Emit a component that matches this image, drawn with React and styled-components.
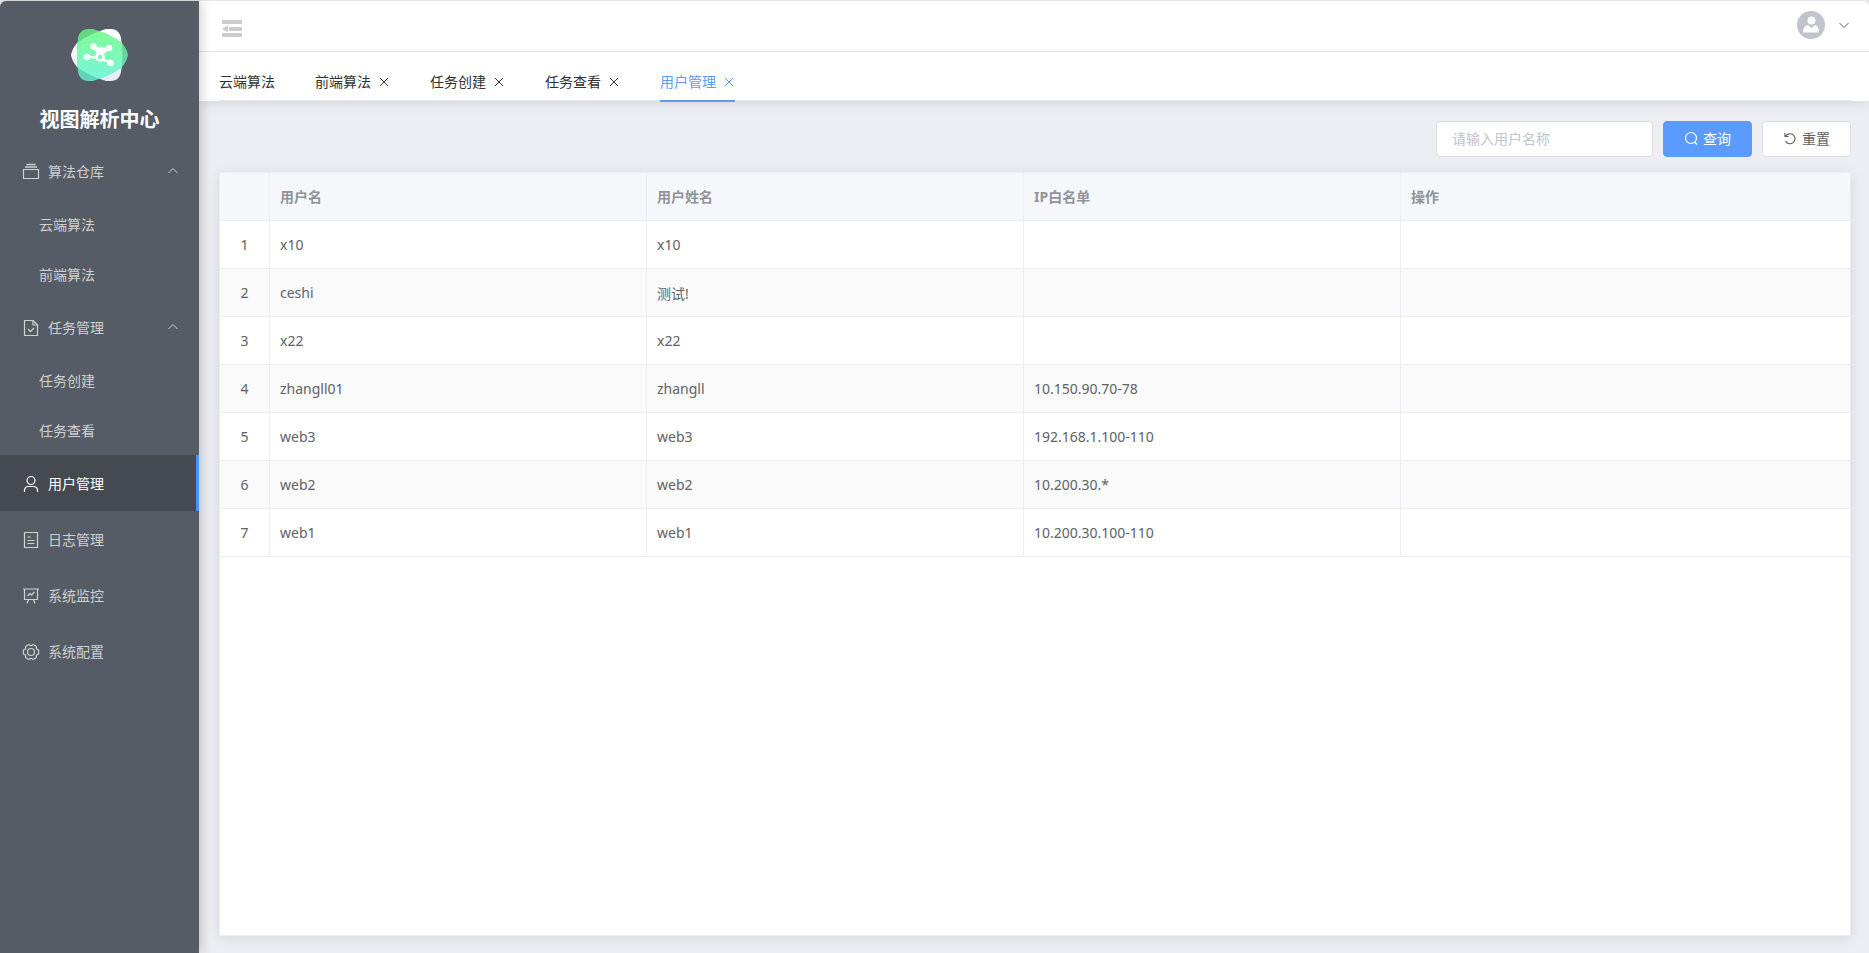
import { useState } from "react";
import { createGlobalStyle, styled } from "styled-components";

const menu = [
  {
    name: "算法仓库",
    icon: "box",
    children: ["云端算法", "前端算法"],
  },
  {
    name: "任务管理",
    icon: "task",
    children: ["任务创建", "任务查看"],
  },
  { name: "用户管理", icon: "user" },
  { name: "日志管理", icon: "log" },
  { name: "系统监控", icon: "monitor" },
  { name: "系统配置", icon: "setting" },
];

const users = [
  { username: "x10", name: "x10", ip: "" },
  { username: "ceshi", name: "测试!", ip: "" },
  { username: "x22", name: "x22", ip: "" },
  { username: "zhangll01", name: "zhangll", ip: "10.150.90.70-78" },
  { username: "web3", name: "web3", ip: "192.168.1.100-110" },
  { username: "web2", name: "web2", ip: "10.200.30.*" },
  { username: "web1", name: "web1", ip: "10.200.30.100-110" },
];

const icons = {
  box: (
    <>
      <path d="M4.5 1.5h9M3 4h12" strokeWidth="1.6" />
      <path d="M1.5 6.5h15v9h-15z" />
    </>
  ),
  task: (
    <>
      <path d="M2.5 1.5h8.5l4.5 4.5v10.5h-13z" />
      <path d="M11 1.5v4.5h4.5M6 10l2.5 2.5 3.5-3.5" />
    </>
  ),
  user: (
    <>
      <circle cx="9" cy="5.5" r="4" />
      <path d="M2.5 17v-2a4 4 0 0 1 4-3.5h5a4 4 0 0 1 4 3.5v2" />
    </>
  ),
  log: (
    <>
      <path d="M2.5 1.5h13v15h-13z" />
      <path d="M5.5 6h3M5.5 9.5h7M5.5 12.5h7" />
    </>
  ),
  monitor: (
    <>
      <path d="M1 2h16M2.5 2v10.5h13V2M6.5 12.5L5 16.5M11.5 12.5l1.5 4" />
      <path d="M5.5 9l2.5-2.5 1.5 1.5 3-3" />
    </>
  ),
  setting: (
    <>
      <path d="M16.6 7.1v3.8L14.5 12.100 14.400 14.600 11.200 16.500 9 15.300 6.800 16.500 3.600 14.600 3.500 12.100 1.400 10.900V7.100L3.500 5.900 3.600 3.400 6.800 1.500 9 2.700 11.200 1.500 14.400 3.400 14.500 5.900z" />
      <circle cx="9" cy="9" r="3.500" />
    </>
  ),
};

const MenuIcon = ({ name }) => (
  <IconBox>
    <svg width="18" height="18" viewBox="0 0 18 18" fill="none" stroke="currentColor" strokeWidth="1.2" strokeLinejoin="round">
      {icons[name]}
    </svg>
  </IconBox>
);

const Arrow = ({ up }) => (
  <svg width="12" height="12" viewBox="0 0 12 12" fill="none" stroke="currentColor">
    <path d={up ? "M1.500 8L6 3.500 10.500 8" : "M1.500 4L6 8.500 10.500 4"} />
  </svg>
);

const Logo = () => (
  <svg width="58" height="54" viewBox="0 0 58 54">
    <defs>
      <linearGradient id="white" x1="0" y1="0" x2="0" y2="1">
        <stop offset="0" stopColor="#ffffff" />
        <stop offset="1" stopColor="#e4ebf8" />
      </linearGradient>
      <linearGradient id="dark" x1="0" y1="0" x2="0" y2="1">
        <stop offset="0" stopColor="#68d67c" />
        <stop offset="1" stopColor="#62d3c0" />
      </linearGradient>
      <linearGradient id="light" x1="0" y1="0" x2="0" y2="1">
        <stop offset="0" stopColor="#82fb94" />
        <stop offset="1" stopColor="#78f5de" />
      </linearGradient>
      <clipPath id="left">
        <path d="M40 1C46 1 49 5 50 10Q53 27 50 44C49 49 46 53 40 53H35Q18 48 6 39 1 33 0 27 1 21 6 15 18 6 35 1z" />
      </clipPath>
    </defs>
    <path
      d="M40 1C46 1 49 5 50 10Q53 27 50 44C49 49 46 53 40 53H35Q18 48 6 39 1 33 0 27 1 21 6 15 18 6 35 1z"
      fill="url(#white)"
    />
    <path
      d="M17 1C11 1 8 5 7 10Q5 27 7 44C8 49 11 53 17 53H22Q39 48 51 39 56 33 57 27 56 21 51 15 39 6 22 1z"
      fill="url(#dark)"
    />
    <path
      d="M17 1C11 1 8 5 7 10Q5 27 7 44C8 49 11 53 17 53H22Q39 48 51 39 56 33 57 27 56 21 51 15 39 6 22 1z"
      fill="url(#light)"
      clipPath="url(#left)"
    />
    <g stroke="#fff" strokeWidth="1.500" fill="#fff">
      <path d="M22.500 18.500L29 29l9-9M16 29h13l10.500 6" />
      <circle cx="22.500" cy="18.500" r="2.500" />
      <circle cx="38" cy="20" r="2.500" />
      <circle cx="16" cy="29" r="2.500" />
      <circle cx="39.500" cy="35" r="2.500" />
      <circle cx="29" cy="29" r="3.500" fill="#7cf8b8" strokeWidth="2.500" />
    </g>
  </svg>
);

const App = () => {
  const [tabs, setTabs] = useState(["云端算法", "前端算法", "任务创建", "任务查看", "用户管理"]);
  const [active, setActive] = useState("用户管理");
  const [closed, setClosed] = useState([]);
  const [keyword, setKeyword] = useState("");
  const [query, setQuery] = useState("");

  const openPage = (name) => {
    if (!tabs.includes(name)) setTabs([...tabs, name]);
    setActive(name);
  };

  const closeTab = (name) => {
    const rest = tabs.filter((tab) => tab !== name);
    setTabs(rest);
    if (name === active) setActive(rest[rest.length - 1]);
  };

  const toggle = (name) => {
    setClosed(closed.includes(name) ? closed.filter((n) => n !== name) : [...closed, name]);
  };

  const handleSubmit = (e) => {
    e.preventDefault();
    setQuery(keyword);
  };

  const handleReset = () => {
    setKeyword("");
    setQuery("");
  };

  return (
    <>
      <GlobalStyle />
      <Page>
        <Sidebar>
          <Brand>
            <Logo />
            <Title>视图解析中心</Title>
          </Brand>
          <nav>
            {menu.map((item) => (
              <div key={item.name}>
                <MenuItem
                  $active={active === item.name}
                  onClick={() => (item.children ? toggle(item.name) : openPage(item.name))}
                >
                  <MenuIcon name={item.icon} />
                  <span>{item.name}</span>
                  {item.children && (
                    <MenuArrow>
                      <Arrow up={!closed.includes(item.name)} />
                    </MenuArrow>
                  )}
                </MenuItem>
                {item.children &&
                  !closed.includes(item.name) &&
                  item.children.map((child) => (
                    <SubItem key={child} $active={active === child} onClick={() => openPage(child)}>
                      {child}
                    </SubItem>
                  ))}
              </div>
            ))}
          </nav>
        </Sidebar>

        <Main>
          <Header>
            <IconButton aria-label="收起菜单">
              <svg width="20" height="18" viewBox="0 0 20 18" fill="#ccc">
                <path d="M0 0h20v4H0zM7 7h13v4H7zM0 13h20v4H0zM0 9l6-3.500v7z" />
              </svg>
            </IconButton>
            <UserButton aria-label="用户菜单">
              <svg width="28" height="28" viewBox="0 0 28 28">
                <circle cx="14" cy="14" r="14" fill="#c1c3cd" />
                <circle cx="14.500" cy="9.500" r="4" fill="#fff" />
                <path d="M6 21.500q0-6.500 5-7.500l3.500 3 3.500-3q4 1 4 7.500z" fill="#fff" />
              </svg>
              <Arrow />
            </UserButton>
          </Header>

          <TabBar>
            <TabNav>
              {tabs.map((tab, i) => (
                <Tab key={tab} $active={tab === active}>
                  <TabLink onClick={() => setActive(tab)}>{tab}</TabLink>
                  {i > 0 && (
                    <TabClose aria-label={`关闭${tab}`} onClick={() => closeTab(tab)}>
                      <svg width="14" height="14" viewBox="0 0 14 14" stroke="currentColor">
                        <path d="M4 4l8 8M12 4l-8 8" />
                      </svg>
                    </TabClose>
                  )}
                </Tab>
              ))}
            </TabNav>
          </TabBar>

          <Content>
            <Toolbar onSubmit={handleSubmit}>
              <Input
                aria-label="用户名称"
                placeholder="请输入用户名称"
                value={keyword}
                onChange={(e) => setKeyword(e.target.value)}
              />
              <Button type="submit" $primary>
                <svg width="14" height="14" viewBox="0 0 14 14" fill="none" stroke="currentColor" strokeWidth="1.200">
                  <circle cx="7" cy="7" r="5.500" />
                  <path d="M10.500 11l2.500 2.500" />
                </svg>
                查询
              </Button>
              <Button type="button" onClick={handleReset}>
                <svg width="14" height="14" viewBox="0 0 14 14" fill="none" stroke="currentColor" strokeWidth="1.200">
                  <path d="M2 2v3.500h3.500M2.500 5.500a5 5 0 1 1 0 4.500" />
                </svg>
                重置
              </Button>
            </Toolbar>

            <Panel>
              <Table>
                <colgroup>
                  <Col $width="50px" />
                  <Col $width="377px" />
                  <Col $width="377px" />
                  <Col $width="377px" />
                  <Col />
                </colgroup>
                <thead>
                  <tr>
                    <Th />
                    <Th>用户名</Th>
                    <Th>用户姓名</Th>
                    <Th>IP白名单</Th>
                    <Th>操作</Th>
                  </tr>
                </thead>
                <tbody>
                  {users
                    .filter((user) => user.username.includes(query))
                    .map((user, i) => (
                      <Row key={user.username}>
                        <Td $center>{i + 1}</Td>
                        <Td>{user.username}</Td>
                        <Td>{user.name}</Td>
                        <Td>{user.ip}</Td>
                        <Td />
                      </Row>
                    ))}
                </tbody>
              </Table>
            </Panel>
          </Content>
        </Main>
      </Page>
    </>
  );
};

const GlobalStyle = createGlobalStyle`
  * {
    box-sizing: border-box;
  }
  body {
    margin: 0;
    background: #e8e8ea;
    font-family: "Noto Sans", "Noto Sans CJK SC", sans-serif;
    font-size: 14px;
    color: #606266;
  }
  button, input {
    font: inherit;
    color: inherit;
  }
  button {
    padding: 0;
    border: none;
    background: none;
    cursor: pointer;
  }
  svg {
    display: block;
    flex-shrink: 0;
  }
`;

const Page = styled.div`
  display: flex;
  min-height: 100vh;
  border-top: 1px solid #e8e8ea;
`;

const Sidebar = styled.aside`
  width: 199px;
  flex-shrink: 0;
  z-index: 2;
  background: #555c65;
  color: #d0d0d0;
  border-top-left-radius: 6px;
  box-shadow: 2px 0 12px rgba(0, 0, 0, 0.2);
`;

const Brand = styled.div`
  display: flex;
  flex-direction: column;
  align-items: center;
  gap: 23px;
  height: 142px;
  padding-top: 27px;
`;

const Title = styled.h1`
  margin: 0;
  font-size: 20px;
  line-height: 30px;
  font-weight: bold;
  color: #fff;
`;

const MenuItem = styled.button`
  display: flex;
  align-items: center;
  gap: 5px;
  width: 100%;
  height: 56px;
  padding-left: 19px;
  padding-right: 17px;
  color: ${(props) => (props.$active ? "#fff" : "inherit")};
  background: ${(props) => (props.$active ? "#454a51" : "none")};
  border-right: 3px solid ${(props) => (props.$active ? "#4791ff" : "transparent")};
`;

const IconBox = styled.span`
  display: flex;
  justify-content: center;
  width: 24px;
  padding-top: 2px;
`;

const MenuArrow = styled.span`
  margin-left: auto;
`;

const SubItem = styled.button`
  display: block;
  width: 100%;
  height: 50px;
  padding-left: 39px;
  text-align: left;
  color: ${(props) => (props.$active ? "#fff" : "inherit")};
`;

const Main = styled.main`
  display: flex;
  flex-direction: column;
  flex: 1;
  min-width: 0;
  background: #edeef3;
  border-top-right-radius: 6px;
`;

const Header = styled.header`
  display: flex;
  align-items: center;
  justify-content: space-between;
  z-index: 1;
  height: 51px;
  padding: 0 19px 2px 23px;
  background: #fff;
  border-bottom: 1px solid #e6e6e6;
  border-top-right-radius: 6px;
`;

const IconButton = styled.button`
  padding-top: 8px;
`;

const UserButton = styled.button`
  display: flex;
  align-items: center;
  gap: 13px;
`;

const TabBar = styled.div`
  padding: 0 18px 0 20px;
  background: #fff;
  box-shadow: 0 2px 12px rgba(0, 0, 0, 0.1);
`;

const TabNav = styled.div`
  display: flex;
  gap: 40px;
  height: 49px;
  padding-top: 9px;
  border-bottom: 1px solid #e4e7ed;
`;

const Tab = styled.div`
  display: flex;
  align-items: center;
  gap: 5px;
  margin-bottom: -2px;
  color: ${(props) => (props.$active ? "#5b9bff" : "#303133")};
  border-bottom: 2px solid ${(props) => (props.$active ? "#5b9bff" : "transparent")};
`;

const TabLink = styled.button`
  height: 100%;
`;

const TabClose = styled.button`
  height: 14px;
`;

const Content = styled.section`
  display: flex;
  flex-direction: column;
  flex: 1;
  gap: 15px;
  padding: 20px 18px 17px 20px;
`;

const Toolbar = styled.form`
  display: flex;
  justify-content: flex-end;
  gap: 10px;
`;

const Input = styled.input`
  width: 217px;
  height: 36px;
  padding: 0 15px 2px;
  background: #fff;
  border: 1px solid #dcdfe6;
  border-radius: 4px;
  outline: none;

  &::placeholder {
    color: #c0c4cc;
  }
`;

const Button = styled.button`
  display: flex;
  align-items: center;
  justify-content: center;
  gap: 5px;
  width: 89px;
  height: 36px;
  padding-bottom: 2px;
  border-radius: 4px;
  color: ${(props) => (props.$primary ? "#fff" : "#606266")};
  background: ${(props) => (props.$primary ? "#5b9bff" : "#fff")};
  border: 1px solid ${(props) => (props.$primary ? "#5b9bff" : "#dcdfe6")};
`;

const Panel = styled.div`
  flex: 1;
  background: #fff;
  border: 1px solid #ebeef5;
  box-shadow: 0 2px 12px rgba(0, 0, 0, 0.1);
`;

const Table = styled.table`
  width: 100%;
  table-layout: fixed;
  border-collapse: separate;
  border-spacing: 0;
`;

const Col = styled.col`
  width: ${(props) => props.$width || "auto"};
`;

const Th = styled.th`
  height: 48px;
  padding: 0 10px 2px;
  text-align: left;
  font-weight: bold;
  color: #909399;
  background: #f5f7fb;
  border-bottom: 1px solid #ebeef5;

  &:not(:last-child) {
    border-right: 1px solid #ebeef5;
  }
`;

const Row = styled.tr`
  &:nth-child(even) {
    background: #fafafa;
  }
`;

const Td = styled.td`
  height: 48px;
  padding: 0 10px;
  text-align: ${(props) => (props.$center ? "center" : "left")};
  border-bottom: 1px solid #ebeef5;

  &:not(:last-child) {
    border-right: 1px solid #ebeef5;
  }
`;

export default App;
